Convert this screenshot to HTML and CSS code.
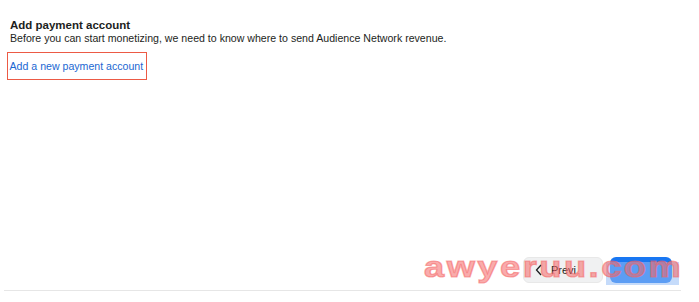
FILE: index.html
```html
<!DOCTYPE html>
<html lang="en">

<head>
    <meta charset="UTF-8">
    <title>Add payment account</title>
    <link rel="stylesheet" href="styles.css">
</head>

<body>
    <div class="page">
        <div class="content">
            <h2 class="title">Add payment account</h2>
            <p class="desc">Before you can start monetizing, we need to know where to send Audience Network revenue.</p>
            <a class="add-link" href="#">Add a new payment account</a>
        </div>

        <div class="actions">
            <button class="btn btn-prev">
                <svg width="8" height="12" viewBox="0 0 8 12"><path d="M6 1 L1.5 6 L6 11" fill="none" stroke="#1c1e21" stroke-width="1.3"/></svg>
                <span>Previ</span>
            </button>
            <button class="btn btn-next"></button>
        </div>
        <div class="divider"></div>

        <!-- watermark over the footer -->
        <div class="wm-box"></div>
        <div class="watermark">awyeruu.com</div>
    </div>
</body>

</html>
```

FILE: styles.css
```css
body {
    margin: 0;
    background: #fff;
    font-family: "Liberation Sans", Arial, sans-serif;
    color: #1c1e21;
}

.page {
    position: relative;
    height: 302px;
    display: flex;
    flex-direction: column;
    overflow: hidden;
}

.content {
    flex: 1;
    padding: 18px 10px 0;
}

.title {
    margin: 0;
    font-size: 11.5px;
    line-height: 14px;
    font-weight: bold;
    color: #1c1e21;
}

.desc {
    margin: 0;
    font-size: 10.6px;
    line-height: 13px;
    color: #1c1e21;
}

.add-link {
    display: inline-block;
    margin: 7px 0 0 -3px;
    padding: 7px 3px 6px 1.5px;
    border: 1.5px solid #ec5a45;
    font-size: 10.6px;
    line-height: 13px;
    color: #1a67d2;
    text-decoration: none;
}

.actions {
    display: flex;
    justify-content: flex-end;
    gap: 7px;
    padding-right: 27px;
}

.btn {
    height: 26px;
    border: none;
    border-radius: 6px;
    padding: 0;
    font-family: inherit;
    font-size: 11px;
}

.btn-prev {
    width: 80px;
    display: flex;
    align-items: center;
    gap: 8px;
    padding-left: 11px;
    background: #f0f1f2;
    border: 1px solid #e8e8e8;
    color: #1c1e21;
}

.btn-next {
    width: 62px;
    background: #1877f2;
}

.divider {
    height: 1px;
    background: #e6e6e6;
    margin: 7px 18px 11px 4px;
}

.wm-box {
    position: absolute;
    left: 606px;
    top: 262px;
    width: 73px;
    height: 23px;
    background: rgba(150, 190, 245, 0.55);
}

.watermark {
    position: absolute;
    left: 424px;
    top: 253px;
    font-size: 29px;
    line-height: 29px;
    font-weight: bold;
    letter-spacing: 2px;
    color: rgba(245, 100, 100, 0.55);
    -webkit-text-stroke: 1.2px rgba(245, 100, 100, 0.55);
    transform: scaleX(1.25);
    transform-origin: left top;
    white-space: nowrap;
}
```
